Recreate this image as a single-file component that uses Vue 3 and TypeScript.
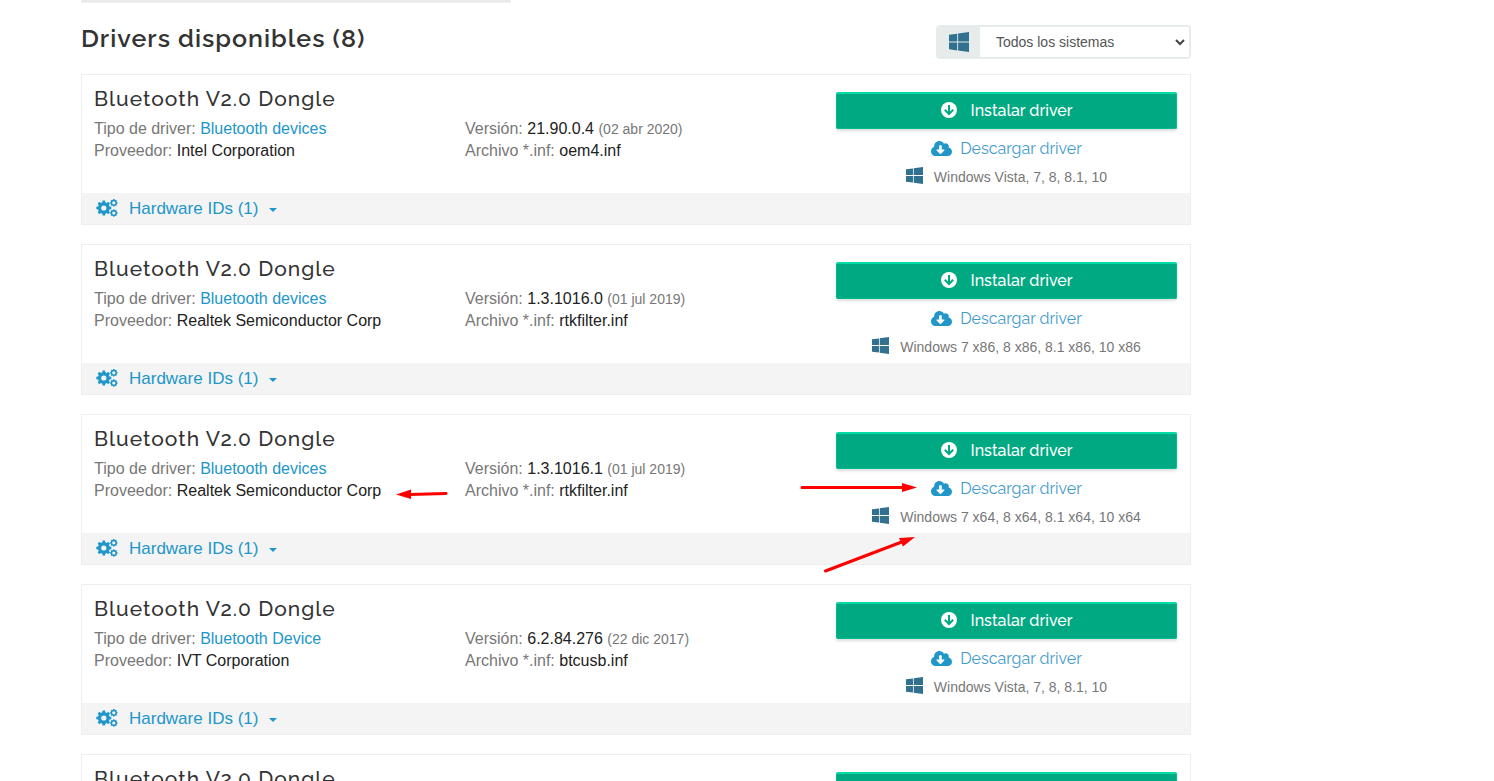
<script setup lang="ts">
import { ref } from 'vue'

interface Driver {
  title: string
  type: string
  provider: string
  version: string
  date: string
  inf: string
  systems: string
  marked?: boolean
}

const system = ref('all')

const drivers: Driver[] = [
  { title: 'Bluetooth V2.0 Dongle', type: 'Bluetooth devices', provider: 'Intel Corporation', version: '21.90.0.4', date: '02 abr 2020', inf: 'oem4.inf', systems: 'Windows Vista, 7, 8, 8.1, 10' },
  { title: 'Bluetooth V2.0 Dongle', type: 'Bluetooth devices', provider: 'Realtek Semiconductor Corp', version: '1.3.1016.0', date: '01 jul 2019', inf: 'rtkfilter.inf', systems: 'Windows 7 x86, 8 x86, 8.1 x86, 10 x86' },
  { title: 'Bluetooth V2.0 Dongle', type: 'Bluetooth devices', provider: 'Realtek Semiconductor Corp', version: '1.3.1016.1', date: '01 jul 2019', inf: 'rtkfilter.inf', systems: 'Windows 7 x64, 8 x64, 8.1 x64, 10 x64', marked: true },
  { title: 'Bluetooth V2.0 Dongle', type: 'Bluetooth Device', provider: 'IVT Corporation', version: '6.2.84.276', date: '22 dic 2017', inf: 'btcusb.inf', systems: 'Windows Vista, 7, 8, 8.1, 10' },
  { title: 'Bluetooth V2.0 Dongle', type: 'Bluetooth Device', provider: 'IVT Corporation', version: '6.2.84.276', date: '22 dic 2017', inf: 'btcusb.inf', systems: 'Windows Vista, 7, 8, 8.1, 10' },
]

const windowsPath =
  'M0 93.7l183.6-25.3v174.4H0V93.7zm0 324.6l183.6 25.3V268.4H0v149.9zm203.8 28L448 480V268.4H203.8v177.9zm0-380.6v177.1H448V32L203.8 65.7z'
const cloudPath =
  'M537.6 226.6c4.1-10.7 6.4-22.4 6.4-34.6 0-53-43-96-96-96-19.7 0-38.1 6-53.3 16.2C367 64.2 315.3 32 256 32c-88.4 0-160 71.6-160 160 0 2.7.1 5.4.2 8.1C40.2 219.8 0 273.2 0 336c0 79.5 64.5 144 144 144h368c70.7 0 128-57.3 128-128 0-61.9-44-113.6-102.4-125.4zm-132.9 88.7L299.3 420.7c-6.2 6.2-16.4 6.2-22.6 0L171.3 315.3c-10.1-10.1-2.9-27.3 11.3-27.3H248V176c0-8.8 7.2-16 16-16h48c8.8 0 16 7.2 16 16v112h65.4c14.2 0 21.4 17.2 11.3 27.3z'

// Outline of a toothed wheel with a round hole, for an even-odd fill.
function gear(cx: number, cy: number, outer: number, inner: number, hole: number, teeth: number): string {
  const step = (Math.PI * 2) / teeth
  const points: string[] = []
  for (let i = 0; i < teeth; i++) {
    const a = i * step
    const corners: [number, number][] = [
      [inner, a - step * 0.32],
      [outer, a - step * 0.22],
      [outer, a + step * 0.22],
      [inner, a + step * 0.32],
    ]
    for (const [r, t] of corners) {
      points.push(`${(cx + r * Math.cos(t)).toFixed(2)} ${(cy + r * Math.sin(t)).toFixed(2)}`)
    }
  }
  return `M${points.join('L')}Z M${cx - hole} ${cy}a${hole} ${hole} 0 1 0 ${hole * 2} 0a${hole} ${hole} 0 1 0 ${-hole * 2} 0Z`
}

const cogsPath = [
  gear(7.8, 9, 7.6, 5.9, 2.6, 8),
  gear(17.8, 3.8, 3.8, 3.2, 1.6, 8),
  gear(17.8, 14, 3.8, 3.2, 1.6, 8),
].join(' ')
</script>

<template>
  <main class="page">
    <div class="strip"></div>
    <header class="head">
      <h1>Drivers disponibles (8)</h1>
      <div class="filter">
        <label class="filter-icon" for="system" aria-label="Sistema">
          <svg width="20" height="20" viewBox="0 32 448 448"><path :d="windowsPath" /></svg>
        </label>
        <div class="filter-field">
          <select id="system" v-model="system">
            <option value="all">Todos los sistemas</option>
          </select>
          <svg class="chevron" width="10" height="7" viewBox="0 0 10 7"><path d="M1 1l4 4 4-4" /></svg>
        </div>
      </div>
    </header>

    <article v-for="(d, i) in drivers" :key="i" class="card">
      <div class="body">
        <section class="info">
          <h2>{{ d.title }}</h2>
          <p>Tipo de driver: <a href="#">{{ d.type }}</a></p>
          <p>Proveedor: <b>{{ d.provider }}</b></p>
        </section>
        <section class="info version">
          <p>Versión: <b>{{ d.version }}</b> <small>({{ d.date }})</small></p>
          <p>Archivo *.inf: <b>{{ d.inf }}</b></p>
        </section>
        <section class="actions">
          <button type="button" class="install">
            <svg width="16" height="16" viewBox="0 0 16 16">
              <circle cx="8" cy="8" r="8" />
              <path d="M8 3v9M3.8 7.8L8 12l4.2-4.2" />
            </svg>
            Instalar driver
          </button>
          <a href="#" class="download">
            <svg width="21" height="15" viewBox="0 32 640 448" preserveAspectRatio="none"><path :d="cloudPath" /></svg>
            Descargar driver
          </a>
          <div class="systems">
            <svg width="17" height="17" viewBox="0 32 448 448"><path :d="windowsPath" /></svg>
            <span>{{ d.systems }}</span>
          </div>
        </section>
      </div>
      <footer class="foot">
        <button type="button" class="ids">
          <svg width="22" height="18" viewBox="0 0 22 18"><path :d="cogsPath" fill-rule="evenodd" /></svg>
          <span>Hardware IDs (1)</span>
          <i class="caret"></i>
        </button>
      </footer>
      <svg v-if="d.marked" class="marks" aria-hidden="true">
        <path class="shaft" d="M364 78.5L328 79.5M720 72.5H823M743.5 156L821 126.5" />
        <path class="tip" d="M314 79.5L329 74.5V84ZM835 72.5L820 68V77ZM833 122L817 123L821 131.5Z" />
      </svg>
    </article>
  </main>
</template>

<style>
body {
  margin: 0;
  background: #fff;
}
</style>

<style scoped>
.page {
  box-sizing: border-box;
  max-width: 1110px;
  height: 100vh;
  overflow: hidden;
  margin-left: 81px;
  font: 16px/22px "Liberation Sans", Arial, sans-serif;
  color: #777;
}

.strip {
  width: 430px;
  max-width: 100%;
  height: 2px;
  background: #eaeaea;
  box-shadow: 0 1px 1px #eee;
}

.head {
  display: flex;
  justify-content: space-between;
  align-items: flex-start;
  padding: 23px 0 15px;
}

h1,
h2 {
  margin: 0;
  font-family: Raleway, Lato, sans-serif;
  letter-spacing: 1px;
  color: #333;
}

h1 {
  font-size: 25px;
  line-height: 26px;
  font-weight: 600;
}

h2 {
  font-size: 21px;
  line-height: 24px;
  font-weight: 500;
  margin-bottom: 7px;
}

.filter {
  display: flex;
  box-sizing: border-box;
  width: 255px;
  height: 34px;
  border: 2px solid #e6eceb;
  border-radius: 4px;
  background: #e6eceb;
}

.filter-icon {
  display: flex;
  align-items: center;
  justify-content: center;
  width: 42px;
  fill: #31708f;
}

.filter-field {
  position: relative;
  flex: 1;
  display: flex;
}

.filter select {
  appearance: none;
  flex: 1;
  border: 0;
  padding: 0 24px 0 16px;
  background: #fff;
  color: #555;
  font: 14px/20px "Liberation Sans", Arial, sans-serif;
}

.chevron {
  position: absolute;
  right: 4px;
  top: 12px;
  fill: none;
  stroke: #444;
  stroke-width: 2;
  pointer-events: none;
}

.card {
  position: relative;
  border: 1px solid #edefef;
  margin-bottom: 19px;
}

.body {
  display: grid;
  grid-template-columns: repeat(3, 1fr);
  gap: 30px;
  padding: 0 13px 0 12px;
}

.info {
  padding-top: 12px;
}

.version {
  padding-top: 43px;
}

p {
  margin: 0;
}

b {
  font-weight: 400;
  color: #222;
}

small {
  font-size: 14px;
}

a {
  color: #2196c9;
  text-decoration: none;
}

.actions {
  display: flex;
  flex-direction: column;
  align-items: center;
  padding: 17px 0 5px;
}

.install {
  display: flex;
  align-items: center;
  justify-content: center;
  gap: 14px;
  box-sizing: border-box;
  width: 100%;
  height: 37px;
  border: 1px solid #00bd90;
  border-top: 2px solid #00dba6;
  border-radius: 2px;
  padding: 0;
  background: #00a981;
  box-shadow: 0 2px 3px #ddd;
  color: #fff;
  font: 500 16px/22px Raleway, Lato, sans-serif;
}

.install svg {
  margin-bottom: 2px;
}

.install circle {
  fill: #fff;
}

.install path {
  fill: none;
  stroke: #00a981;
  stroke-width: 2;
}

.download {
  display: flex;
  align-items: center;
  gap: 8px;
  margin: 8px 0 5px;
  color: #3f9bcb;
  font: 400 16px/24px Raleway, Lato, sans-serif;
}

.download svg {
  fill: #2196c9;
  margin-bottom: 2px;
}

.systems {
  display: flex;
  align-items: center;
  gap: 11px;
  font-size: 14px;
}

.systems svg {
  fill: #31708f;
  margin-bottom: 4px;
}

.foot {
  background: #f4f4f4;
  padding: 0 14px;
}

.ids {
  display: flex;
  align-items: center;
  height: 31px;
  border: 0;
  padding: 0;
  background: none;
  color: #2196c9;
  font: 17px/22px "Liberation Sans", Arial, sans-serif;
}

.ids svg {
  fill: #2196c9;
  margin: 0 11px 2px 0;
}

.caret {
  margin: 3px 0 0 11px;
  border: 4px solid transparent;
  border-top-color: #2196c9;
  border-bottom: 0;
}

.marks {
  position: absolute;
  left: 0;
  top: 0;
  width: 100%;
  height: 100%;
  overflow: visible;
  pointer-events: none;
}

.shaft {
  fill: none;
  stroke: #f00;
  stroke-width: 3;
  stroke-linecap: round;
}

.tip {
  fill: #f00;
}
</style>
